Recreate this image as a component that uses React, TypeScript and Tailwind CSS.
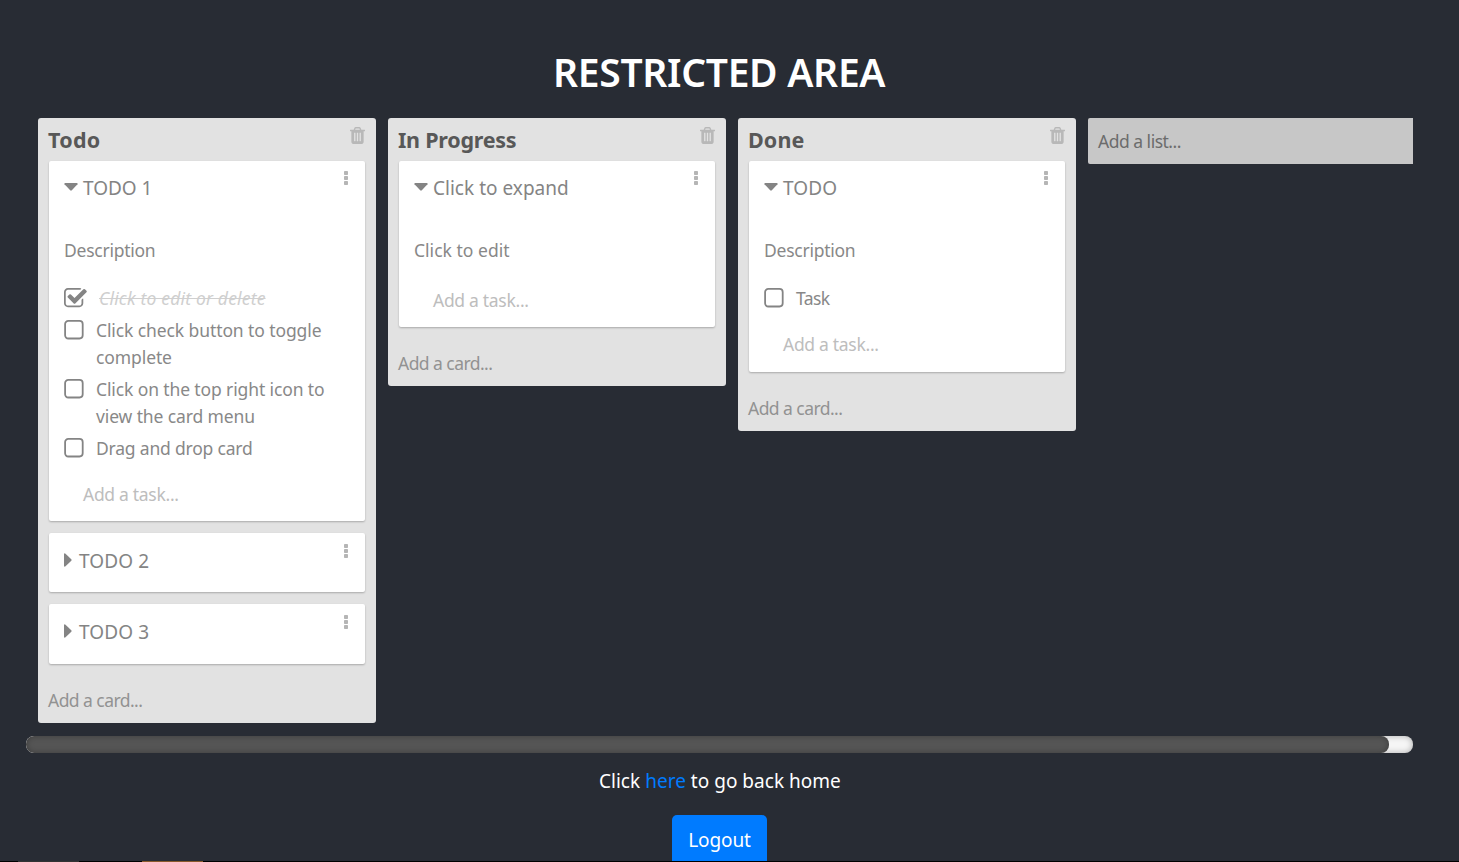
import type { ReactNode } from "react";

const TRASH =
  "M704 1376v-704q0-14-9-23t-23-9h-64q-14 0-23 9t-9 23v704q0 14 9 23t23 9h64q14 0 23-9t9-23zm256 0v-704q0-14-9-23t-23-9h-64q-14 0-23 9t-9 23v704q0 14 9 23t23 9h64q14 0 23-9t9-23zm256 0v-704q0-14-9-23t-23-9h-64q-14 0-23 9t-9 23v704q0 14 9 23t23 9h64q14 0 23-9t9-23zm-544-992h448l-48-117q-7-9-17-11h-317q-10 2-17 11zm928 32v64q0 14-9 23t-23 9h-96v948q0 83-47 143.5t-113 60.5h-832q-66 0-113-58.5t-47-141.5v-952h-96q-14 0-23-9t-9-23v-64q0-14 9-23t23-9h309l70-167q15-37 54-63t79-26h320q40 0 79 26t54 63l70 167h309q14 0 23 9t9 23z";

const CHECKED =
  "M1472 930v318q0 119-84.5 203.5t-203.5 84.5h-832q-119 0-203.5-84.5t-84.5-203.5v-832q0-119 84.5-203.5t203.5-84.5h832q63 0 117 25 15 7 18 23 3 17-9 29l-49 49q-10 10-23 10-3 0-9-2-23-6-45-6h-832q-66 0-113 47t-47 113v832q0 66 47 113t113 47h832q66 0 113-47t47-113v-254q0-13 9-22l64-64q10-10 23-10 6 0 12 3 20 8 20 29zm231-489l-814 814q-24 24-57 24t-57-24l-430-430q-24-24-24-57t24-57l110-110q24-24 57-24t57 24l263 263 647-647q24-24 57-24t57 24l110 110q24 24 24 57t-24 57z";

function Dots() {
  return (
    <svg className="mt-[10px] h-[14px] w-[4px] shrink-0 fill-[#b5b5b5]" viewBox="0 0 4 14">
      <rect width="4" height="4" rx="0.8" />
      <rect y="5" width="4" height="4" rx="0.8" />
      <rect y="10" width="4" height="4" rx="0.8" />
    </svg>
  );
}

type CardProps = { title: string; tracking: string; open?: boolean; height: string; children?: ReactNode };

function Card({ title, tracking, open, height, children }: CardProps) {
  return (
    <div className={`${height} mb-3 flex shrink-0 flex-col rounded-[2px] bg-white pl-[15px] shadow-[0_1px_2px_rgba(0,0,0,0.25)]`}>
      <div className={`${open ? "" : "pt-px"} flex items-start justify-between pr-[17px]`}>
        <div className="flex h-[54px] items-center">
          {open ? (
            <svg className="mr-[5px] mb-[2px] h-[8px] w-[14px] fill-[#848484]" viewBox="0 0 14 8">
              <path d="M1 0h12q1 .3.5 1.2L7.8 7.3q-.8.7-1.6 0L.5 1.2Q0 .3 1 0z" />
            </svg>
          ) : (
            <svg className="mr-[7px] mb-[2px] h-[14px] w-[8px] fill-[#848484]" viewBox="0 0 8 14">
              <path d="M0 1q.3-1 1.2-.5l6.1 5.7q.7.8 0 1.6l-6.1 5.7Q.3 14 0 13z" />
            </svg>
          )}
          <span className={`${tracking} whitespace-nowrap text-[19px] text-[#848484]`}>{title}</span>
        </div>
        <Dots />
      </div>
      {children}
    </div>
  );
}

function Description({ text, tracking }: { text: string; tracking: string }) {
  return <p className={`${tracking} mt-[22px] h-[27px] text-[17.5px] leading-[27px] text-[#888]`}>{text}</p>;
}

function Task({ lines, tracking, done }: { lines: string[]; tracking: string; done?: boolean }) {
  return (
    <div className="mb-[5px] flex items-start">
      {done ? (
        <svg className="mt-[3px] mr-[12px] h-[20px] w-[23px] fill-[#848484]" viewBox="64 128 1680 1461">
          <path d={CHECKED} />
        </svg>
      ) : (
        <svg className="mt-[3px] mr-[12px] h-[20px] w-[20px] fill-none stroke-[#848484] stroke-[1.8]" viewBox="0 0 20 20">
          <rect x="1.1" y="0.9" width="17.6" height="17.6" rx="3.2" />
        </svg>
      )}
      <div className={`${tracking} text-[17.5px] leading-[27px] whitespace-nowrap`}>
        {lines.map((line) => (
          <div key={line} className={done ? "text-[#cfcfcf] italic line-through" : "text-[#888]"}>
            {line}
          </div>
        ))}
      </div>
    </div>
  );
}

function AddTask() {
  return <div className="pl-[19px] text-[17.5px] leading-[27px] tracking-[-0.3px] text-[#bdbdbd]">Add a task...</div>;
}

function Column({ title, tracking, height, children }: { title: string; tracking: string; height: string; children: ReactNode }) {
  return (
    <section className={`${height} flex w-[338px] shrink-0 flex-col rounded-[3px] bg-[#e2e2e2] px-[11px]`}>
      <header className="flex h-[43px] shrink-0 items-start justify-between">
        <h2 className={`${tracking} mt-[7px] -ml-px text-[21.5px] leading-[30px] font-bold text-[#585858]`}>{title}</h2>
        <svg className="mt-[9px] h-[17px] w-[15px] fill-[#b8b8b8]" viewBox="192 128 1408 1536" preserveAspectRatio="none">
          <path d={TRASH} />
        </svg>
      </header>
      {children}
      <div className="mt-[11px] -ml-px text-[17.5px] leading-[27px] tracking-[-0.55px] text-[#929292]">Add a card...</div>
    </section>
  );
}

export default function App() {
  return (
    <main className="flex h-[862px] w-[1459px] flex-col overflow-hidden bg-[#282c34] font-['Noto_Sans',sans-serif]">
      <h1 className="mt-[45px] ml-[553px] h-[73px] text-[39px] leading-[54px] font-semibold tracking-[-0.3px] whitespace-nowrap text-white">RESTRICTED AREA</h1>
      <div className="ml-[38px] flex h-[605px] items-start gap-3">
        <Column title="Todo" tracking="tracking-[0.3px]" height="h-[605px]">
          <Card title="TODO 1" tracking="tracking-[-0.05px]" open height="h-[360px]">
            <Description text="Description" tracking="tracking-[-0.25px]" />
            <div className="mt-[21px]">
              <Task done lines={["Click to edit or delete"]} tracking="tracking-[0.18px]" />
              <Task lines={["Click check button to toggle", "complete"]} tracking="tracking-[-0.1px]" />
              <Task lines={["Click on the top right icon to", "view the card menu"]} tracking="tracking-[-0.12px]" />
              <Task lines={["Drag and drop card"]} tracking="tracking-[-0.2px]" />
            </div>
            <div className="mt-[14px]">
              <AddTask />
            </div>
          </Card>
          <Card title="TODO 2" tracking="tracking-[0.1px]" height="h-[59px]" />
          <Card title="TODO 3" tracking="tracking-[0.1px]" height="h-[60px]" />
        </Column>
        <Column title="In Progress" tracking="tracking-[-0.25px]" height="h-[268px]">
          <Card title="Click to expand" tracking="tracking-[0.02px]" open height="h-[166px]">
            <Description text="Click to edit" tracking="tracking-[0.02px]" />
            <div className="mt-[23px]">
              <AddTask />
            </div>
          </Card>
        </Column>
        <Column title="Done" tracking="tracking-[0.1px]" height="h-[313px]">
          <Card title="TODO" tracking="tracking-[0.1px]" open height="h-[211px]">
            <Description text="Description" tracking="tracking-[-0.25px]" />
            <div className="mt-[21px]">
              <Task lines={["Task"]} tracking="tracking-[-0.6px]" />
            </div>
            <div className="mt-[14px]">
              <AddTask />
            </div>
          </Card>
        </Column>
        <div className="flex h-[46px] w-[325px] items-center rounded-l-[2px] bg-[#c7c7c7] pl-[10px] text-[17.5px] tracking-[-0.5px] text-[#6c6c6c]">Add a list...</div>
      </div>
      <div className="mt-[13px] ml-[26px] h-[17px] w-[1387px] shrink-0 overflow-hidden rounded-[8px] bg-[#f5f5f5] shadow-[inset_0_0_6px_rgba(0,0,0,0.3)]">
        <div className="h-full w-[1363px] rounded-[8px] bg-[#555] shadow-[inset_0_0_6px_rgba(0,0,0,0.3)]" />
      </div>
      <p className="mt-[13px] ml-[599px] h-[30px] shrink-0 text-[19px] leading-[30px] tracking-[0.02px] whitespace-nowrap text-white">
        Click <a className="text-[#007bff]">here</a> to go back home
      </p>
      <button className="mt-[19px] ml-[672px] flex h-[46px] w-[95px] shrink-0 items-center justify-center rounded-t-[5px] bg-[#007bff] pt-[4px] text-[19px] tracking-[-0.1px] text-white">Logout</button>
      <div className="flex h-px shrink-0 bg-black">
        <div className="ml-[18px] w-[61px] bg-[#333]" />
        <div className="ml-[63px] w-[61px] bg-[#8a5a2c]" />
      </div>
    </main>
  );
}
